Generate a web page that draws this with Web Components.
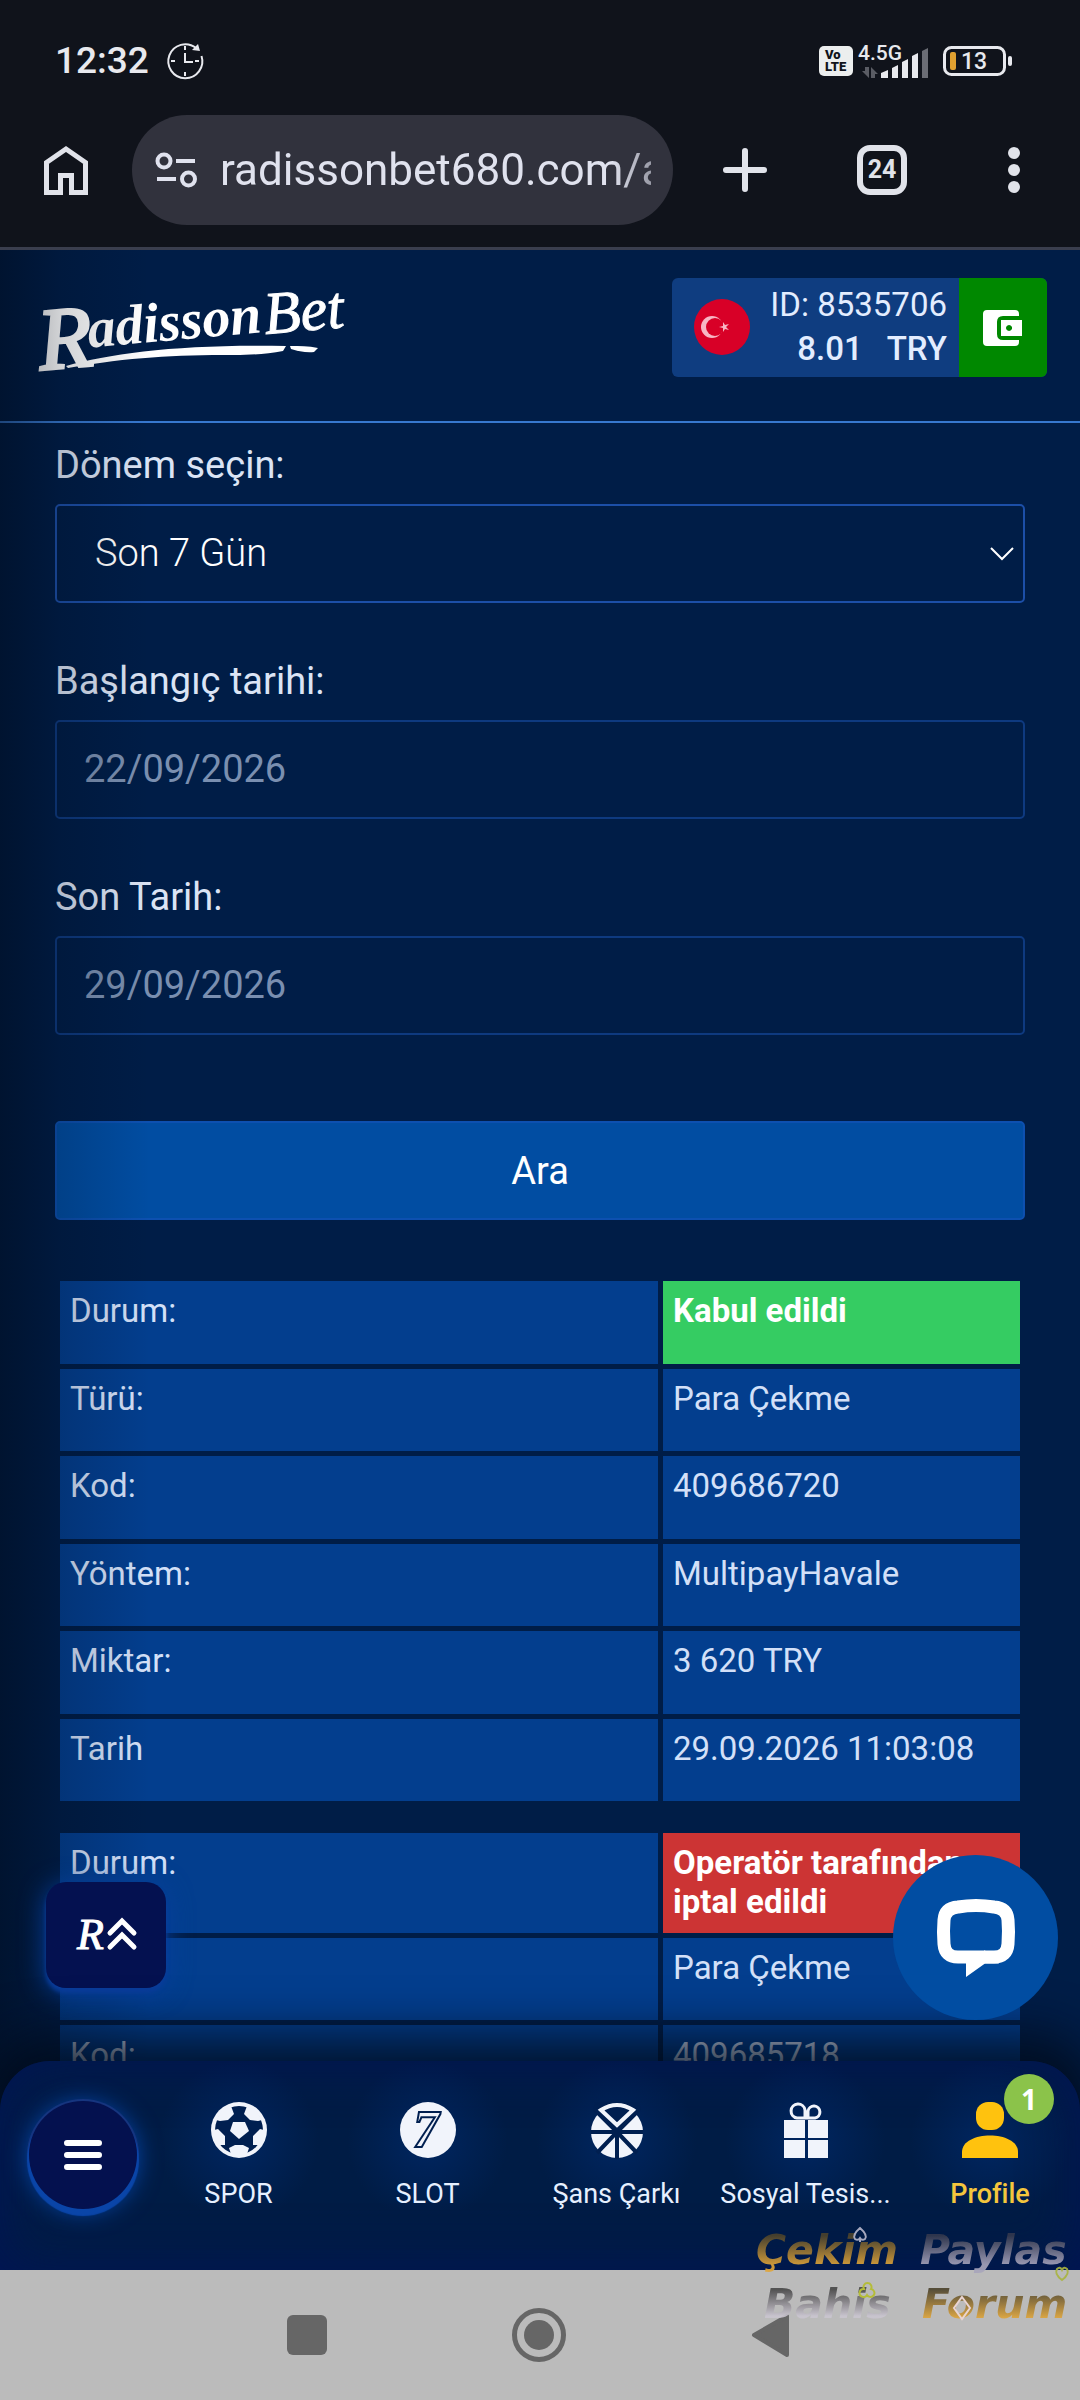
<!DOCTYPE html>
<html lang="tr">
  <head>
    <meta charset="utf-8">
    <title>RadissonBet</title>
    <meta name="viewport" content="width=device-width">
    <style>
      html, body {
        margin: 0;
        height: 100%;
      }
      body {
        overflow: hidden;
        background: #001d47;
        font-family: Roboto, "Noto Sans", sans-serif;
        --text: #dbe4f5;
        --field-size: 38px;
        --small-size: 33px;
      }
    </style>
  </head>
  <body>
    <phone-shell>
      <status-bar slot="top" time="12:32" battery="13"></status-bar>
      <browser-bar slot="top" url="radissonbet680.com/account" tabs="24"></browser-bar>

      <site-header>
        <account-box user="8535706" balance="8.01" currency="TRY"></account-box>
      </site-header>
      <history-form>
        <form-field type="select" label="Dönem seçin:" value="Son 7 Gün"></form-field>
        <form-field type="text" label="Başlangıç tarihi:" value="22/09/2026"></form-field>
        <form-field type="text" label="Son Tarih:" value="29/09/2026"></form-field>
        <search-button>Ara</search-button>
        <record-list></record-list>
      </history-form>

      <top-button slot="over"></top-button>
      <tab-bar slot="over">
        <tab-item icon="ball">SPOR</tab-item>
        <tab-item icon="seven">SLOT</tab-item>
        <tab-item icon="wheel">Şans Çarkı</tab-item>
        <tab-item icon="gift">Sosyal Tesis...</tab-item>
        <tab-item icon="user" badge="1" active>Profile</tab-item>
      </tab-bar>
      <chat-button slot="over"></chat-button>

      <system-bar slot="bottom"></system-bar>
      <forum-mark slot="mark"></forum-mark>
    </phone-shell>

    <script>
      const BASE = `
        :host { display: block; box-sizing: border-box; }
        *, *::before { box-sizing: border-box; }
        svg { display: block; flex: none; overflow: visible; }
        button { appearance: none; border: 0; margin: 0; padding: 0; background: none; color: inherit; font: inherit; cursor: pointer; }
      `;

      // render() returns the markup of the shadow root.
      class BaseElement extends HTMLElement {
        constructor() {
          super();
          this.attachShadow({ mode: 'open' });
        }
        connectedCallback() {
          this.shadowRoot.innerHTML = `<style>${BASE}${this.css()}</style>${this.render()}`;
        }
        attr(name) {
          return this.getAttribute(name) || '';
        }
        css() {
          return '';
        }
        render() {
          return '<slot></slot>';
        }
      }

      customElements.define('phone-shell', class extends BaseElement {
        css() {
          return `
            :host { display: flex; flex-direction: column; height: 100vh; position: relative; }
            .page { flex: 1; min-height: 0; position: relative; overflow: hidden; background: #001d47; }
            .shade { position: absolute; inset: 0 auto 0 0; width: 150px; pointer-events: none; background: linear-gradient(90deg, rgba(0, 8, 20, 0.45), rgba(0, 8, 20, 0.18) 40%, transparent); }
          `;
        }
        render() {
          return `
            <slot name="top"></slot>
            <div class="page"><slot></slot><div class="shade"></div><slot name="over"></slot></div>
            <slot name="bottom"></slot>
            <slot name="mark"></slot>
          `;
        }
      });

      customElements.define('status-bar', class extends BaseElement {
        css() {
          return `
            :host { display: flex; align-items: center; flex: none; height: 115px; padding: 6px 67px 0 55px; background: #10131b; color: #e8e9ee; }
            time { font-size: 37px; font-weight: 500; }
            .clock { margin-left: 18px; }
            .volte { display: grid; align-content: center; margin-left: auto; width: 34px; height: 30px; padding-left: 6px; border-radius: 5px; background: #eceeee; color: #10131b; font-size: 13px; font-weight: 900; line-height: 12px; }
            .net { width: 72px; height: 36px; margin-left: 4px; }
            .net text { font-size: 21px; font-weight: 500; }
            .battery { margin-left: 14px; }
            .battery text { font-size: 23px; font-weight: 500; }
          `;
        }
        render() {
          return `
            <time>${this.attr('time')}</time>
            <svg class="clock" width="36" height="38" viewBox="0 0 36 38" fill="none" stroke="currentColor" stroke-width="2">
              <path d="M34.5 14A17 17 0 1 1 29 6"/>
              <path d="M18 11v9h8M18 4v4M18 30v4M4 19h4M28 19h4"/>
              <path d="M25 8l8 1-2-7z" fill="currentColor" stroke="none"/>
            </svg>
            <span class="volte"><span>Vo</span><span>LTE</span></span>
            <svg class="net" viewBox="0 0 72 36">
              <text x="1" y="17" fill="currentColor">4.5G</text>
              <path fill="#5a5c64" d="M8 24h4v11l-7-7h3zM14 24l7 7h-3v4h-4z"/>
              <g fill="currentColor">
                <path d="M24 35v-5l7-3v8z"/><path d="M35 35V25l6-3v13z"/><path d="M45 35V19l6-3v19z"/><path d="M55 35V13l6-3v25z"/>
                <path d="M65 35V8l6-3v30z" fill="#6b6d75"/>
              </g>
            </svg>
            <svg class="battery" width="70" height="30" viewBox="0 0 70 30">
              <rect x="1.5" y="1.5" width="60" height="27" rx="7" fill="none" stroke="currentColor" stroke-width="3"/>
              <rect x="7" y="6" width="6" height="18" rx="2" fill="#e0a030"/>
              <rect x="65" y="10" width="4" height="10" rx="2" fill="currentColor"/>
              <text x="18" y="23" fill="currentColor">${this.attr('battery')}</text>
            </svg>
          `;
        }
      });

      customElements.define('browser-bar', class extends BaseElement {
        css() {
          return `
            :host { display: flex; align-items: center; flex: none; padding: 0 49px 22px 44px; border-bottom: 3px solid #3a3e4e; background: #10131b; color: #e1e3ea; }
            .omnibox { flex: 1; min-width: 0; display: flex; align-items: center; gap: 23px; height: 110px; margin-left: 44px; padding: 0 22px 0 23px; border-radius: 55px; background: #31323d; }
            input { flex: 1; min-width: 0; padding: 0; border: 0; outline: 0; background: none; color: #e0e2ee; font: 44px Roboto, sans-serif; -webkit-mask-image: linear-gradient(90deg, #000 calc(100% - 40px), rgba(0, 0, 0, 0.6)); }
            .actions { display: flex; align-items: center; gap: 90px; margin-left: 50px; }
            .tabs { width: 50px; height: 50px; border: 6px solid currentColor; border-radius: 13px; font-size: 25px; font-weight: 700; line-height: 38px; text-align: center; }
          `;
        }
        render() {
          return `
            <button aria-label="Ana sayfa">
              <svg width="44" height="50" viewBox="0 0 44 50" fill="none" stroke="currentColor" stroke-width="5"><path d="M2.5 17.500L22 4l19.500 13.500V47.500H27.500V30.500h-11V47.500H2.500z"/></svg>
            </button>
            <div class="omnibox">
              <svg width="42" height="36" viewBox="0 0 42 36" fill="none" stroke="#e0e2ee" stroke-width="4"><circle cx="9" cy="9" r="6.500"/><circle cx="33.500" cy="27" r="6.500"/><path d="M21 9h19M2 27h19"/></svg>
              <input type="text" aria-label="Adres" value="${this.attr('url')}">
            </div>
            <div class="actions">
              <button aria-label="Yeni sekme">
                <svg width="44" height="44" viewBox="0 0 44 44" stroke="currentColor" stroke-width="6" stroke-linecap="round"><path d="M22 3v38M3 22h38"/></svg>
              </button>
              <button class="tabs">${this.attr('tabs')}</button>
              <button aria-label="Menü">
                <svg width="34" height="46" viewBox="0 0 34 46" fill="currentColor"><circle cx="17" cy="6" r="6"/><circle cx="17" cy="23" r="6"/><circle cx="17" cy="40" r="6"/></svg>
              </button>
            </div>
          `;
        }
      });

      customElements.define('site-header', class extends BaseElement {
        css() {
          return `
            :host { display: flex; justify-content: space-between; align-items: flex-start; padding: 28px 33px 44px 32px; border-bottom: 2px solid #3778cf; }
            text { font-family: "Liberation Serif", serif; font-style: italic; font-weight: 700; }
            .thin { font-weight: 400; stroke: #fff; stroke-width: 1; }
          `;
        }
        render() {
          return `
            <a href="#" aria-label="RadissonBet">
              <svg width="320" height="99" viewBox="0 0 320 99" fill="#fff">
                <g transform="rotate(-5 50 70)">
                  <text class="thin" x="7" y="88" font-size="88" style="stroke-width: 3">R</text>
                  <text x="57" y="70" font-size="56">adisson</text>
                  <text class="thin" x="234" y="72" font-size="60">Bet</text>
                </g>
                <path d="M34 88C80 75 150 66 254 68l-3 5c-16 3-34 4-48 4C140 77 100 79 36 90z"/>
                <path d="M258 68c10 0 18 0 28 2l-4 4c-8 1-16-1-23-3z"/>
              </svg>
            </a>
            <slot></slot>
          `;
        }
      });

      customElements.define('account-box', class extends BaseElement {
        css() {
          return `
            :host { display: flex; height: 99px; overflow: hidden; border-radius: 6px; background: #0f3d80; color: #e3edff; font-size: var(--small-size); line-height: 44px; }
            .info { display: flex; align-items: center; gap: 20px; padding: 0 12px 2px 22px; }
            .sum { display: flex; justify-content: flex-end; gap: 24px; font-weight: 500; }
            .wallet { display: grid; place-items: center; width: 88px; background: #008800; }
          `;
        }
        render() {
          return `
            <div class="info">
              <svg width="56" height="56" viewBox="0 0 56 56">
                <circle cx="28" cy="28" r="28" fill="#d80027"/>
                <circle cx="18" cy="28" r="11" fill="#f7b6c4"/><circle cx="21" cy="28" r="9" fill="#d80027"/>
                <path fill="#f7b6c4" d="M29 23l2 3 4-1-3 3 3 3-4-1-2 3v-4l-4-1 4-1z"/>
              </svg>
              <div>
                <div>ID: ${this.attr('user')}</div>
                <div class="sum"><span>${this.attr('balance')}</span><span>${this.attr('currency')}</span></div>
              </div>
            </div>
            <button class="wallet" aria-label="Cüzdan">
              <svg width="40" height="36" viewBox="0 0 40 36">
                <path fill="#fff" d="M4 0h28q4 0 4 4v2H20q-6 0-6 6v12q0 6 6 6h16v2q0 4-4 4H4q-4 0-4-4V4q0-4 4-4z"/>
                <path fill="#fff" fill-rule="evenodd" d="M18 10h21v16H18zM26 15a3 3 0 1 0 .1 0z"/>
              </svg>
            </button>
          `;
        }
      });

      customElements.define('history-form', class extends BaseElement {
        css() {
          return ':host { display: flex; flex-direction: column; gap: 56px; padding: 20px 55px; }';
        }
      });

      customElements.define('form-field', class extends BaseElement {
        css() {
          return `
            :host { font-size: var(--field-size); color: var(--text); }
            label { display: block; line-height: 44px; margin-bottom: 17px; }
            .box { display: grid; align-items: center; height: 99px; }
            .box > * { grid-area: 1 / 1; }
            input, select { appearance: none; width: 100%; height: 100%; margin: 0; padding: 0 27px 2px; border: 2px solid #0e3a80; border-radius: 5px; outline: 0; background: none; color: #7a8fb0; font: inherit; }
            select { padding: 0 38px 2px; border-color: #1c4fa8; color: #fff; font-weight: 300; }
            svg { justify-self: end; margin-right: 11px; pointer-events: none; }
          `;
        }
        render() {
          const control = this.attr('type') === 'select'
            ? `<select id="f"><option>${this.attr('value')}</option></select>
               <svg width="24" height="14" viewBox="0 0 24 14" fill="none" stroke="#fff" stroke-width="2"><path d="M1 1l11 11L23 1"/></svg>`
            : `<input id="f" type="text" value="${this.attr('value')}">`;
          return `<label for="f">${this.attr('label')}</label><div class="box">${control}</div>`;
        }
      });

      customElements.define('search-button', class extends BaseElement {
        css() {
          return `
            :host { margin-top: 30px; }
            button { width: 100%; height: 99px; border: 2px solid #0d50b0; border-radius: 5px; background: #014da2; color: #fff; font-size: var(--field-size); }
          `;
        }
        render() {
          return '<button><slot></slot></button>';
        }
      });

      const RECORDS = [
        {
          state: 'ok',
          rows: [
            ['Durum:', 'Kabul edildi'],
            ['Türü:', 'Para Çekme'],
            ['Kod:', '409686720'],
            ['Yöntem:', 'MultipayHavale'],
            ['Miktar:', '3 620 TRY'],
            ['Tarih', '29.09.2026 11:03:08'],
          ],
        },
        {
          state: 'cancelled',
          rows: [
            ['Durum:', 'Operatör tarafından iptal edildi'],
            ['Türü:', 'Para Çekme'],
            ['Kod:', '409685718'],
          ],
        },
      ];

      customElements.define('record-list', class extends BaseElement {
        css() {
          return `
            :host { display: grid; gap: 22px; color: #d3e0f8; font-size: var(--small-size); line-height: 39px; }
            table { width: 100%; table-layout: fixed; border-spacing: 5px; }
            tr { height: 83px; }
            tr:nth-child(even) { height: 82px; }
            th, td { padding: 10px 10px 12px; background: #033e8e; font-weight: 400; text-align: left; vertical-align: top; }
            .ok tr:first-child td { background: #35cc62; }
            .cancelled tr:first-child td { background: #cc3434; }
            tr:first-child td { color: #fff; font-weight: 700; }
          `;
        }
        render() {
          return RECORDS.map(({ state, rows }) => `
            <table class="${state}">
              <colgroup><col><col style="width: 357px"></colgroup>
              ${rows.map(([name, value]) => `<tr><th scope="row">${name}</th><td>${value}</td></tr>`).join('')}
            </table>
          `).join('');
        }
      });

      customElements.define('top-button', class extends BaseElement {
        css() {
          return `
            :host { position: absolute; left: 46px; bottom: 282px; }
            button { display: grid; place-items: center; width: 120px; height: 106px; border-radius: 20px; background: #041150; box-shadow: 0 5px 4px #0a3d9c, 0 4px 26px #07409f; }
            text { font: italic 44px "Liberation Serif", serif; }
          `;
        }
        render() {
          return `
            <button aria-label="Yukarı çık">
              <svg width="60" height="38" viewBox="0 0 60 38" fill="none" stroke="#fff" stroke-width="5" stroke-linecap="round">
                <text x="1" y="33" fill="#fff" stroke-width="1">R</text>
                <path d="M34 17L46 5l12 12M34 31l12-12 12 12"/>
              </svg>
            </button>
          `;
        }
      });

      customElements.define('chat-button', class extends BaseElement {
        css() {
          return `
            :host { position: absolute; right: 22px; bottom: 250px; }
            button { display: grid; place-items: center; width: 165px; height: 165px; border-radius: 50%; background: #014da2; }
          `;
        }
        render() {
          return `
            <button aria-label="Canlı destek">
              <svg width="78" height="78" viewBox="0 0 78 78" fill="none" stroke="#fff" stroke-width="13" stroke-linejoin="round">
                <path d="M29 58H21Q8 58 7 45Q6 32 7 21Q8 9 21 8Q39 5 57 8Q70 9 71 21Q72 32 71 45Q70 58 57 58H47"/>
                <path d="M29 51.500h19l14 13H48L29 78z" fill="#fff" stroke="none"/>
              </svg>
            </button>
          `;
        }
      });

      const ICONS = {
        ball: `
          <circle cx="28" cy="28" r="28" fill="#f1f4fb"/>
          <circle cx="28" cy="28" r="24" fill="#001f50"/>
          <g fill="#f1f4fb">
            <path d="M22 20h12l4 9-10 8-9-8z"/>
            <path d="M5 18l6-9 9-5 3 8-6 6-8 1zM51 18l-6-9-9-5-3 8 6 6 8 1z"/>
            <path d="M3 28l4-1 7 7v9H8l-5-8zM53 28l-4-1-7 7v9h6l5-8z"/>
            <path d="M18 46l6-3h8l6 3-2 6-8 3-8-3z"/>
          </g>`,
        seven: `
          <circle cx="28" cy="28" r="28" fill="#f1f4fb"/>
          <text x="13" y="45" font-size="52" fill="#f1f4fb" stroke="#001f50" stroke-width="2">7</text>`,
        wheel: `
          <circle cx="28" cy="30" r="26" fill="#f1f4fb"/>
          <path d="M2 30h52M28 30v27M28 30l20 21M28 30L8 51M28 30L6 8M28 30L50 8" stroke="#001f50" stroke-width="4"/>
          <path d="M28 32L4 8 6 0h44l2 8z" fill="#001f50"/>
          <path d="M28 23L12 8Q28-2 44 8z" fill="#001f50" stroke="#f1f4fb" stroke-width="4"/>`,
        gift: `
          <path d="M6 18h21v18H6zM30 18h20v18H30zM6 38h21v18H6zM30 38h20v18H30z" fill="#f1f4fb"/>
          <path d="M27 16h-8a7 7 0 1 1 8-8zM30 16h7a6 6 0 1 0-7-7z" fill="none" stroke="#f1f4fb" stroke-width="3"/>`,
        user: `
          <rect x="14" y="0" width="28" height="28" rx="12" fill="#ffc20e"/>
          <path d="M0 56v-6c0-22 56-22 56 0v6z" fill="#ffc20e"/>`,
      };

      customElements.define('tab-bar', class extends BaseElement {
        css() {
          return `
            :host { position: absolute; inset: auto 0 0 0; height: 209px; border-radius: 50px 50px 0 0; background: #001c45; box-shadow: inset 0 0 56px #001455, 0 -10px 50px 16px rgba(0, 10, 24, 0.8); }
            nav { display: grid; grid-template-columns: 144px repeat(4, minmax(0, 21fr)) minmax(0, 20fr); }
            .menu { display: grid; place-items: center; width: 108px; height: 108px; margin: 40px 0 0 29px; border-radius: 50%; background: #04114f; box-shadow: 0 5px 1px 2px #0a45a8, 0 0 0 2px #16357f, 0 2px 24px #064bb5; }
          `;
        }
        render() {
          return `
            <nav>
              <button class="menu" aria-label="Menü">
                <svg width="40" height="32" viewBox="0 0 40 32" stroke="#fff" stroke-width="6" stroke-linecap="round"><path d="M4 4h32M4 16h32M4 28h32"/></svg>
              </button>
              <slot></slot>
            </nav>
          `;
        }
      });

      customElements.define('tab-item', class extends BaseElement {
        css() {
          return `
            a { display: grid; justify-items: center; gap: 20px; padding-top: 41px; color: #e6f0ff; font-size: 27px; line-height: 32px; text-decoration: none; white-space: nowrap; background: radial-gradient(circle at 50% 80px, rgba(0, 48, 125, 0.5), transparent 80px); }
            :host([active]) a { color: #f4c63d; font-weight: 500; }
            .icon { position: relative; }
            .badge { position: absolute; left: 42px; top: -28px; width: 50px; height: 50px; border-radius: 50%; background: #8bc34a; color: #fff; font: 700 28px/50px "Open Sans", sans-serif; text-align: center; }
            text { font-family: "Liberation Serif", serif; font-style: italic; font-weight: 700; }
          `;
        }
        render() {
          const badge = this.hasAttribute('badge') ? `<span class="badge">${this.attr('badge')}</span>` : '';
          return `
            <a href="#">
              <span class="icon"><svg width="56" height="56" viewBox="0 0 56 56">${ICONS[this.attr('icon')]}</svg>${badge}</span>
              <slot></slot>
            </a>
          `;
        }
      });

      customElements.define('system-bar', class extends BaseElement {
        css() {
          return `
            :host { display: flex; flex: none; justify-content: center; align-items: center; gap: 178px; height: 130px; padding-right: 2px; background: #bbb; }
          `;
        }
        render() {
          return `
            <button aria-label="Son uygulamalar"><svg width="54" height="54" viewBox="0 0 54 54"><rect x="7" y="7" width="40" height="40" rx="6" fill="#666"/></svg></button>
            <button aria-label="Ana ekran"><svg width="54" height="54" viewBox="0 0 54 54"><circle cx="27" cy="27" r="24.500" fill="none" stroke="#666" stroke-width="5"/><circle cx="27" cy="27" r="15" fill="#666"/></svg></button>
            <button aria-label="Geri"><svg width="54" height="54" viewBox="0 0 54 54"><path d="M10 27L43 8v39z" fill="#666" stroke="#666" stroke-width="4" stroke-linejoin="round"/></svg></button>
          `;
        }
      });

      customElements.define('forum-mark', class extends BaseElement {
        css() {
          return `
            :host { position: absolute; right: 0; bottom: 62px; pointer-events: none; opacity: 0.9; }
            text { font: italic 700 41px "DejaVu Sans", sans-serif; }
          `;
        }
        render() {
          return `
            <svg width="328" height="114" viewBox="0 0 328 114">
              <defs>
                <linearGradient id="gold" x1="0" y1="0" x2="0" y2="1"><stop offset="0.2" stop-color="#4c432c"/><stop offset="0.8" stop-color="#e0a539"/></linearGradient>
                <linearGradient id="silver" x1="0" y1="0" x2="0" y2="1"><stop offset="0.2" stop-color="#34394e"/><stop offset="0.8" stop-color="#a8a5bc"/></linearGradient>
                <linearGradient id="steel" x1="0" y1="0" x2="0" y2="1"><stop offset="0.2" stop-color="#484848"/><stop offset="0.75" stop-color="#cac5d0"/></linearGradient>
              </defs>
              <text x="4" y="40" fill="url(#gold)">Çekim</text>
              <text x="168" y="40" fill="url(#silver)">Paylas</text>
              <text x="12" y="94" fill="url(#steel)">Bahis</text>
              <text x="170" y="94" fill="url(#gold)">Forum</text>
              <g fill="none" stroke-width="2">
                <path d="M108 4q-8 7-5 11 3 2 5-1 2 3 5 1 3-4-5-11zM108 14v4" stroke="#b8b8cc"/>
                <path d="M310 56q-8-6-5-11 3-3 5 1 2-4 5-1 3 5-5 11z" stroke="#a9b440"/>
                <path d="M119 65a4 4 0 1 0-7 0 4 4 0 1 0 3 6 4 4 0 1 0 4-6z" stroke="#b4bd2c"/>
                <path d="M210 73l8 11-8 11-8-11z" stroke="#eed7d5"/>
              </g>
            </svg>
          `;
        }
      });
    </script>
  </body>
</html>
